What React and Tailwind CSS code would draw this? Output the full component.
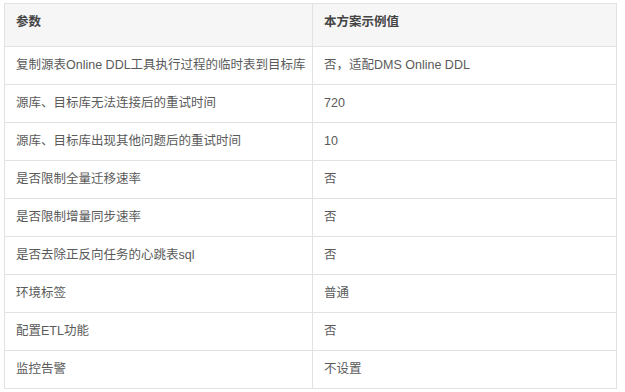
export default function App() {
  const rows = [
    ["复制源表Online DDL工具执行过程的临时表到目标库", "否，适配DMS Online DDL"],
    ["源库、目标库无法连接后的重试时间", "720"],
    ["源库、目标库出现其他问题后的重试时间", "10"],
    ["是否限制全量迁移速率", "否"],
    ["是否限制增量同步速率", "否"],
    ["是否去除正反向任务的心跳表sql", "否"],
    ["环境标签", "普通"],
    ["配置ETL功能", "否"],
    ["监控告警", "不设置"],
  ];
  return (
    <div
      className="w-[625px] h-[392px] bg-white pt-[3px] pl-[4px]"
      style={{ fontFamily: '"Liberation Sans", "Noto Sans CJK SC", sans-serif' }}
    >
      <div className="w-[613px] border border-[#e2e2e2] text-[12.5px]">
        <div className="flex h-[43px] bg-[#f6f6f6] border-b border-[#e2e2e2] font-bold text-[#444]">
          <div className="w-[308px] border-r border-[#e2e2e2] pl-[11px] pt-[9px] leading-[19px]">参数</div>
          <div className="flex-1 pl-[11px] pt-[9px] leading-[19px]">本方案示例值</div>
        </div>
        {rows.map((r, i) => (
          <div
            key={i}
            className={`flex text-[#5a5a5a] ${i < rows.length - 1 ? "h-[38px] border-b border-[#e2e2e2]" : "h-[37px]"}`}
          >
            <div className="w-[308px] border-r border-[#e2e2e2] pl-[11px] flex items-center whitespace-nowrap leading-[19px]">{r[0]}</div>
            <div className="flex-1 pl-[11px] flex items-center whitespace-nowrap leading-[19px]">{r[1]}</div>
          </div>
        ))}
      </div>
    </div>
  );
}
